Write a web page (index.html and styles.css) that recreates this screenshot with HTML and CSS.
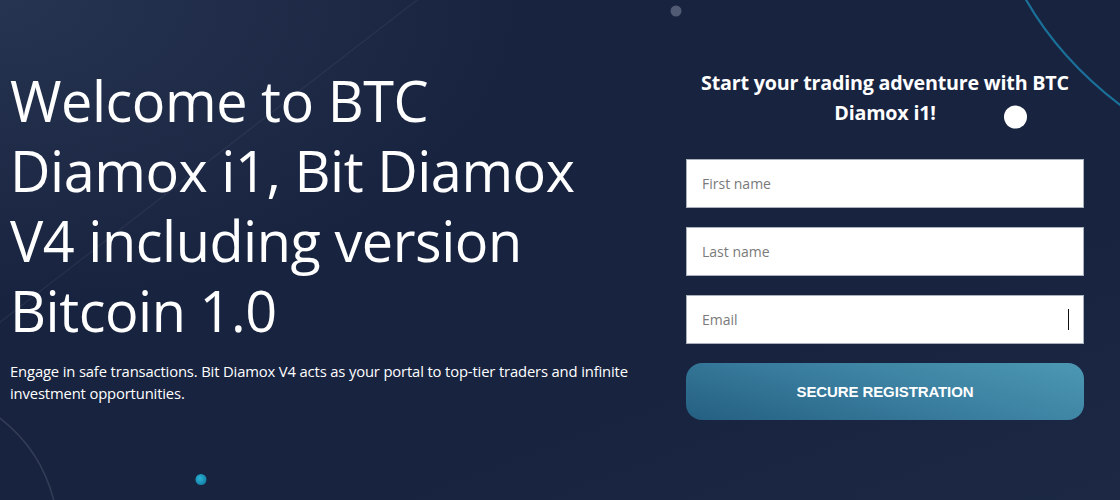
FILE: index.html
```html
<!DOCTYPE html>
<html lang="en">
<head>
<meta charset="utf-8">
<title>BTC Diamox i1</title>
<link rel="stylesheet" href="styles.css">
</head>
<body>
<div class="hero">
  <svg class="decor" width="1120" height="500" viewBox="0 0 1120 500" aria-hidden="true">
    <defs>
      <radialGradient id="tealdot" cx="40%" cy="40%" r="60%">
        <stop offset="0" stop-color="#2bb3d6"/>
        <stop offset="1" stop-color="#1583a8"/>
      </radialGradient>
    </defs>
    <line x1="-10" y1="330" x2="430" y2="-10" stroke="#ffffff" stroke-opacity="0.05" stroke-width="1.5"/>
    <path d="M-40 395 Q40 430 56 510" fill="none" stroke="#ffffff" stroke-opacity="0.12" stroke-width="1.5"/>
    <path d="M1025 -2 Q1060 60 1124 108" fill="none" stroke="#1a7099" stroke-width="2.2"/>
    <circle cx="676" cy="11" r="5.5" fill="#515b74"/>
    <circle cx="1015.5" cy="117" r="11.5" fill="#ffffff"/>
    <circle cx="201" cy="479.5" r="5.5" fill="url(#tealdot)"/>
  </svg>
  <div class="content">
    <section class="intro">
      <h1 class="title">Welcome to BTC Diamox i1, Bit Diamox V4 including version Bitcoin 1.0</h1>
      <p class="lead">Engage in safe transactions. Bit Diamox V4 acts as your portal to top-tier traders and infinite investment opportunities.</p>
    </section>
    <section class="signup">
      <h2 class="signup-title">Start your trading adventure with BTC Diamox i1!</h2>
      <form class="form">
        <input class="field" type="text" placeholder="First name">
        <input class="field" type="text" placeholder="Last name">
        <div class="field-wrap">
          <input class="field" type="email" placeholder="Email">
          <span class="caret"></span>
        </div>
        <button class="submit" type="button">SECURE REGISTRATION</button>
      </form>
    </section>
  </div>
</div>
</body>
</html>
```

FILE: styles.css
```css
* { box-sizing: border-box; }
html, body { margin: 0; padding: 0; }
body {
  width: 1120px;
  height: 500px;
  overflow: hidden;
  background: #18233f;
  font-family: "Open Sans", "Noto Sans", sans-serif;
  color: #ffffff;
}
.hero {
  position: relative;
  width: 1120px;
  height: 500px;
  background:
    radial-gradient(ellipse 520px 300px at 0 0, rgba(50, 66, 95, 0.55), rgba(24, 35, 63, 0) 100%),
    linear-gradient(160deg, rgba(0,0,0,0) 70%, rgba(30, 44, 72, 0.6) 100%),
    #18233f;
}
.decor {
  position: absolute;
  left: 0;
  top: 0;
  pointer-events: none;
}
.content {
  position: relative;
  display: flex;
  gap: 36px;
  padding: 0 36px 0 10px;
  align-items: flex-start;
}
.intro {
  flex: 1;
  padding-top: 65px;
}
.title {
  margin: 0;
  max-width: 590px;
  font-weight: 400;
  font-size: 55.8px;
  line-height: 70px;
  letter-spacing: -0.45px;
}
.lead {
  margin: 15px 0 0;
  font-size: 14.8px;
  line-height: 22px;
  letter-spacing: -0.15px;
}
.signup {
  width: 398px;
  padding-top: 68px;
}
.signup-title {
  margin: 0;
  padding: 0 8px;
  text-align: center;
  font-size: 19.7px;
  font-weight: 700;
  line-height: 30px;
  letter-spacing: -0.2px;
}
.form {
  display: flex;
  flex-direction: column;
  gap: 19px;
  margin-top: 31px;
}
.field-wrap { position: relative; }
.field {
  display: block;
  width: 100%;
  height: 49px;
  padding: 0 15px;
  border: 1px solid #a9b1bd;
  background: #ffffff;
  font-family: "Open Sans", "Noto Sans", sans-serif;
  font-size: 14px;
  color: #333;
  outline: none;
}
.field::placeholder { color: #7a7a7a; }
.caret {
  position: absolute;
  right: 15px;
  top: 14px;
  width: 1px;
  height: 21px;
  background: #111;
}
.submit {
  height: 57px;
  border: none;
  border-radius: 16px;
  background: linear-gradient(15deg, #245f80 0%, #3a7e9f 50%, #4c98b3 100%);
  color: #ffffff;
  font-family: "Liberation Sans", Arial, sans-serif;
  font-weight: 700;
  font-size: 15px;
  letter-spacing: -0.1px;
  cursor: pointer;
}
```
